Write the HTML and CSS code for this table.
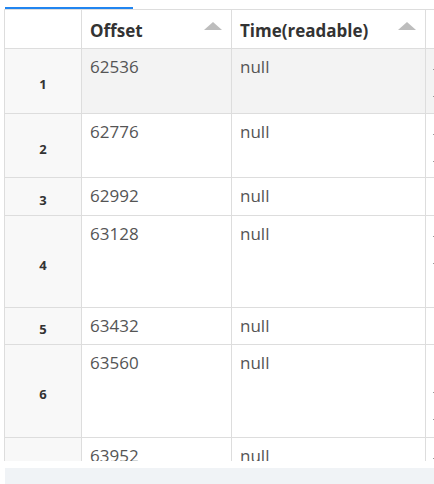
FILE: index.html
```html
<!DOCTYPE html>
<html>
<head>
<meta charset="utf-8">
<link rel="stylesheet" href="styles.css">
</head>
<body>
<div class="panel">
  <div class="tabbar"><div class="tab-active"></div></div>
  <div class="grid-wrap">
    <div class="grid">
      <div class="cell hcell corner"></div>
      <div class="cell hcell"><span>Offset</span><i class="sort"></i></div>
      <div class="cell hcell"><span>Time(readable)</span><i class="sort"></i></div>
      <div class="cell hcell"></div>

      <div class="cell rnum">1</div>
      <div class="cell data sel">62536</div>
      <div class="cell data sel">null</div>
      <div class="cell data sel more"><i class="mark"></i><i class="mark"></i></div>

      <div class="cell rnum">2</div>
      <div class="cell data">62776</div>
      <div class="cell data">null</div>
      <div class="cell data more"><i class="mark"></i><i class="mark"></i></div>

      <div class="cell rnum">3</div>
      <div class="cell data">62992</div>
      <div class="cell data">null</div>
      <div class="cell data more"></div>

      <div class="cell rnum">4</div>
      <div class="cell data">63128</div>
      <div class="cell data">null</div>
      <div class="cell data more"><i class="mark"></i><i class="mark"></i></div>

      <div class="cell rnum">5</div>
      <div class="cell data">63432</div>
      <div class="cell data">null</div>
      <div class="cell data more"></div>

      <div class="cell rnum">6</div>
      <div class="cell data">63560</div>
      <div class="cell data">null</div>
      <div class="cell data more"><i class="mark gap"></i><i class="mark"></i><i class="mark"></i></div>

      <div class="cell rnum">7</div>
      <div class="cell data">63952</div>
      <div class="cell data">null</div>
      <div class="cell data more"><i class="mark"></i></div>
    </div>
  </div>
  <div class="hscroll"></div>
</div>
</body>
</html>
```
FILE: styles.css
```css
html, body {
  margin: 0;
  padding: 0;
  background: #ffffff;
}

body {
  font-family: "Open Sans", "Noto Sans", sans-serif;
  overflow: hidden;
}

.panel {
  padding: 7px 0 0 4px;
}

.tabbar {
  height: 2px;
  margin-left: 1px;
}

.tab-active {
  width: 128px;
  height: 2px;
  background: #2185f0;
}

.grid-wrap {
  box-sizing: border-box;
  width: 430px;
  height: 452px;
  border-top: 1px solid #dddddd;
  border-left: 1px solid #dddddd;
  overflow: hidden;
}

.grid {
  display: grid;
  grid-template-columns: 77px 150px 194px 220px;
  grid-template-rows: 39px 65px 64px 38px 92px 37px 93px 92px;
  width: max-content;
}

.cell {
  box-sizing: border-box;
  border-right: 1px solid #dddddd;
  border-bottom: 1px solid #dddddd;
  overflow: hidden;
}

.hcell {
  display: flex;
  align-items: center;
  justify-content: space-between;
  padding: 3px 9px 0 8px;
  background: #ffffff;
  font-weight: 700;
  font-size: 17px;
  line-height: 24px;
  color: #333333;
  white-space: nowrap;
}

.sort {
  align-self: flex-start;
  margin-top: 9px;
  width: 0;
  height: 0;
  border-left: 9px solid transparent;
  border-right: 9px solid transparent;
  border-bottom: 8px solid #bdbdbd;
}

.rnum {
  display: flex;
  align-items: center;
  justify-content: center;
  padding-top: 6px;
  background: #f8f8f8;
  font-weight: 700;
  font-size: 13px;
  color: #333333;
}

.data {
  padding: 6px 8px 0 8px;
  font-size: 17px;
  line-height: 24px;
  color: #555555;
}

.data.sel {
  background: #f3f3f3;
}

.more {
  display: flex;
  flex-direction: column;
  padding: 20px 0 0 7px;
  gap: 26px;
}

.mark {
  display: block;
  width: 2px;
  height: 1px;
  background: #999999;
}

.mark.gap {
  visibility: hidden;
}

.hscroll {
  margin: 7px 0 0 1px;
  height: 16px;
  background: #f0f3f6;
}
```
